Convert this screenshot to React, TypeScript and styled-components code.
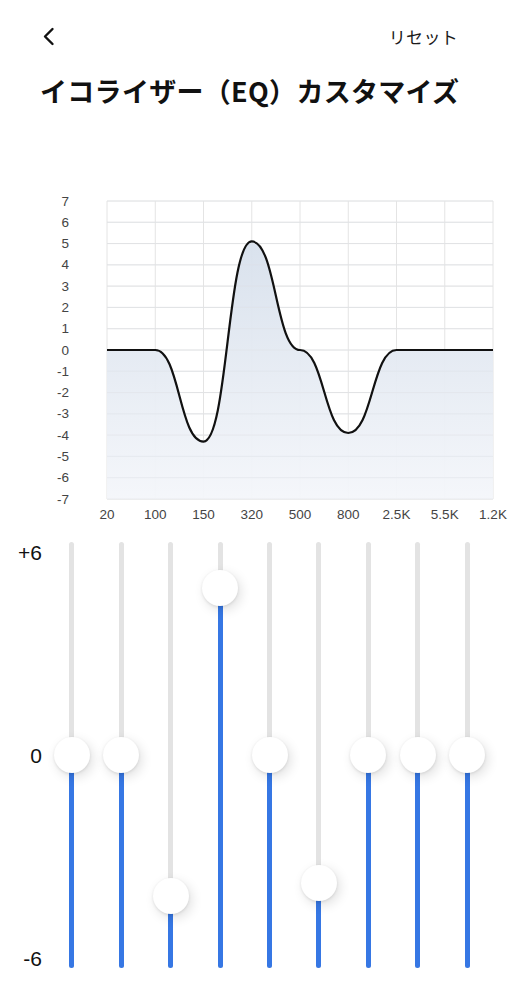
import React from "react";
import styled, { createGlobalStyle } from "styled-components";

const GlobalStyle = createGlobalStyle`
  html, body { margin: 0; padding: 0; background: #ffffff; }
  body { font-family: "Noto Sans CJK JP", "Noto Sans", sans-serif; color: #111; }
  * { box-sizing: border-box; }
`;

const Page = styled.div`
  width: 515px;
  height: 1000px;
  background: #fff;
  display: flex;
  flex-direction: column;
  overflow: hidden;
`;

const TopBar = styled.div`
  height: 73px;
  padding: 0 57px 0 40px;
  display: flex;
  align-items: center;
  justify-content: space-between;
`;

const BackButton = styled.button`
  border: none;
  background: none;
  padding: 0;
  width: 16px;
  height: 20px;
  display: flex;
  align-items: center;
  justify-content: center;
  cursor: pointer;
`;

const ResetButton = styled.button`
  border: none;
  background: none;
  padding: 0;
  font-family: "Noto Sans CJK JP", sans-serif;
  font-size: 17px;
  line-height: 24px;
  letter-spacing: 0.3px;
  color: #1a1a1a;
  cursor: pointer;
`;

const Title = styled.h1`
  margin: 0;
  padding: 0 0 0 40px;
  font-family: "Noto Sans CJK JP", sans-serif;
  font-weight: 700;
  font-size: 27px;
  line-height: 36px;
  color: #111;
  letter-spacing: 0.3px;
`;

const ChartWrap = styled.div`
  margin-top: 76px;
  height: 340px;
`;

const SliderSection = styled.div`
  margin-top: 17px;
  display: flex;
  align-items: stretch;
  height: 428px;
`;

const ScaleColumn = styled.div`
  width: 42px;
  display: flex;
  flex-direction: column;
  justify-content: space-between;
  align-items: flex-end;
`;

const ScaleLabel = styled.span`
  font-family: "Liberation Sans", Arial, sans-serif;
  font-size: 21px;
  line-height: 22px;
  color: #111;
`;

const SliderGrid = styled.div`
  margin-left: 5.3px;
  display: grid;
  grid-template-columns: repeat(9, 49.4px);
`;

const SliderColumn = styled.div`
  display: flex;
  justify-content: center;
`;

const Track = styled.div`
  position: relative;
  width: 5px;
  height: 426px;
  border-radius: 3px;
  background: #e3e3e3;
`;

const Fill = styled.div`
  position: absolute;
  left: 0;
  bottom: 0;
  width: 5px;
  border-radius: 3px;
  background: #3677e4;
`;

const Knob = styled.div`
  position: absolute;
  left: 50%;
  width: 36px;
  height: 36px;
  margin-left: -18px;
  border-radius: 50%;
  background: #fff;
  box-shadow: 0 1px 3px rgba(0, 0, 0, 0.1), 3px 4px 12px rgba(0, 0, 0, 0.12);
`;

const bands = ["20", "100", "150", "320", "500", "800", "2.5K", "5.5K", "1.2K"];
const values = [0, 0, -4.3, 5.1, 0, -3.9, 0, 0, 0];

const X0 = 107;
const X1 = 493;
const Y_TOP = 201;
const Y_BOT = 499;
const Y_ZERO = (Y_TOP + Y_BOT) / 2;
const DX = (X1 - X0) / 8;
const DY = (Y_BOT - Y_TOP) / 14;

const px = (i: number) => X0 + i * DX;
const py = (v: number) => Y_ZERO - v * DY;

function curvePath(): string {
  let d = `M ${px(0)} ${py(values[0])}`;
  for (let i = 1; i < values.length; i++) {
    const xa = px(i - 1);
    const xb = px(i);
    const ya = py(values[i - 1]);
    const yb = py(values[i]);
    const c = (xb - xa) * 0.5;
    d += ` C ${xa + c} ${ya} ${xb - c} ${yb} ${xb} ${yb}`;
  }
  return d;
}

const EqChart: React.FC = () => {
  const line = curvePath();
  const area = `${line} L ${X1} ${Y_BOT} L ${X0} ${Y_BOT} Z`;
  const yTicks = Array.from({ length: 15 }, (_, k) => 7 - k);
  return (
    <svg width="515" height="340" viewBox="0 185 515 340">
      <defs>
        <linearGradient id="eqFill" x1="0" y1={Y_TOP} x2="0" y2={Y_BOT} gradientUnits="userSpaceOnUse">
          <stop offset="0" stopColor="#d3ddea" />
          <stop offset="1" stopColor="#f4f6fa" />
        </linearGradient>
      </defs>
      {yTicks.map((v) => (
        <line key={`h${v}`} x1={X0} x2={X1} y1={py(v)} y2={py(v)} stroke="#e4e4e4" strokeWidth="1" />
      ))}
      {bands.map((_, i) => (
        <line key={`v${i}`} x1={px(i)} x2={px(i)} y1={Y_TOP} y2={Y_BOT} stroke="#e4e4e4" strokeWidth="1" />
      ))}
      <path d={area} fill="url(#eqFill)" opacity="0.95" />
      {yTicks.map((v) => (
        <line key={`hh${v}`} x1={X0} x2={X1} y1={py(v)} y2={py(v)} stroke="#dfe3e8" strokeOpacity="0.5" strokeWidth="1" />
      ))}
      <path d={line} fill="none" stroke="#111" strokeWidth="2.2" strokeLinejoin="round" />
      {yTicks.map((v) => (
        <text
          key={`yl${v}`}
          x={69}
          y={py(v)}
          textAnchor="end"
          dominantBaseline="central"
          fontFamily="Liberation Sans, Arial, sans-serif"
          fontSize="13.5"
          fill="#444"
        >
          {v}
        </text>
      ))}
      {bands.map((b, i) => (
        <text
          key={`xl${b}`}
          x={px(i)}
          y={514}
          textAnchor="middle"
          dominantBaseline="central"
          fontFamily="Liberation Sans, Arial, sans-serif"
          fontSize="13.5"
          fill="#444"
        >
          {b}
        </text>
      ))}
    </svg>
  );
};

const PX_PER_DB = 32.8;
const TRACK_CENTER = 213;

const BandSlider: React.FC<{ value: number }> = ({ value }) => {
  const center = TRACK_CENTER - value * PX_PER_DB;
  return (
    <SliderColumn>
      <Track>
        <Fill style={{ height: `${426 - center}px` }} />
        <Knob style={{ top: `${center - 18}px` }} />
      </Track>
    </SliderColumn>
  );
};

export default function App() {
  return (
    <>
      <GlobalStyle />
      <Page>
        <TopBar>
          <BackButton aria-label="戻る">
            <svg width="13" height="19" viewBox="0 0 13 19">
              <path d="M10.5 2 L3 9.5 L10.5 17" fill="none" stroke="#111" strokeWidth="2.4" strokeLinecap="round" strokeLinejoin="round" />
            </svg>
          </BackButton>
          <ResetButton>リセット</ResetButton>
        </TopBar>
        <Title>イコライザー（EQ）カスタマイズ</Title>
        <ChartWrap>
          <EqChart />
        </ChartWrap>
        <SliderSection>
          <ScaleColumn>
            <ScaleLabel>+6</ScaleLabel>
            <ScaleLabel>0</ScaleLabel>
            <ScaleLabel>-6</ScaleLabel>
          </ScaleColumn>
          <SliderGrid>
            {values.map((v, i) => (
              <BandSlider key={bands[i]} value={v} />
            ))}
          </SliderGrid>
        </SliderSection>
      </Page>
    </>
  );
}
